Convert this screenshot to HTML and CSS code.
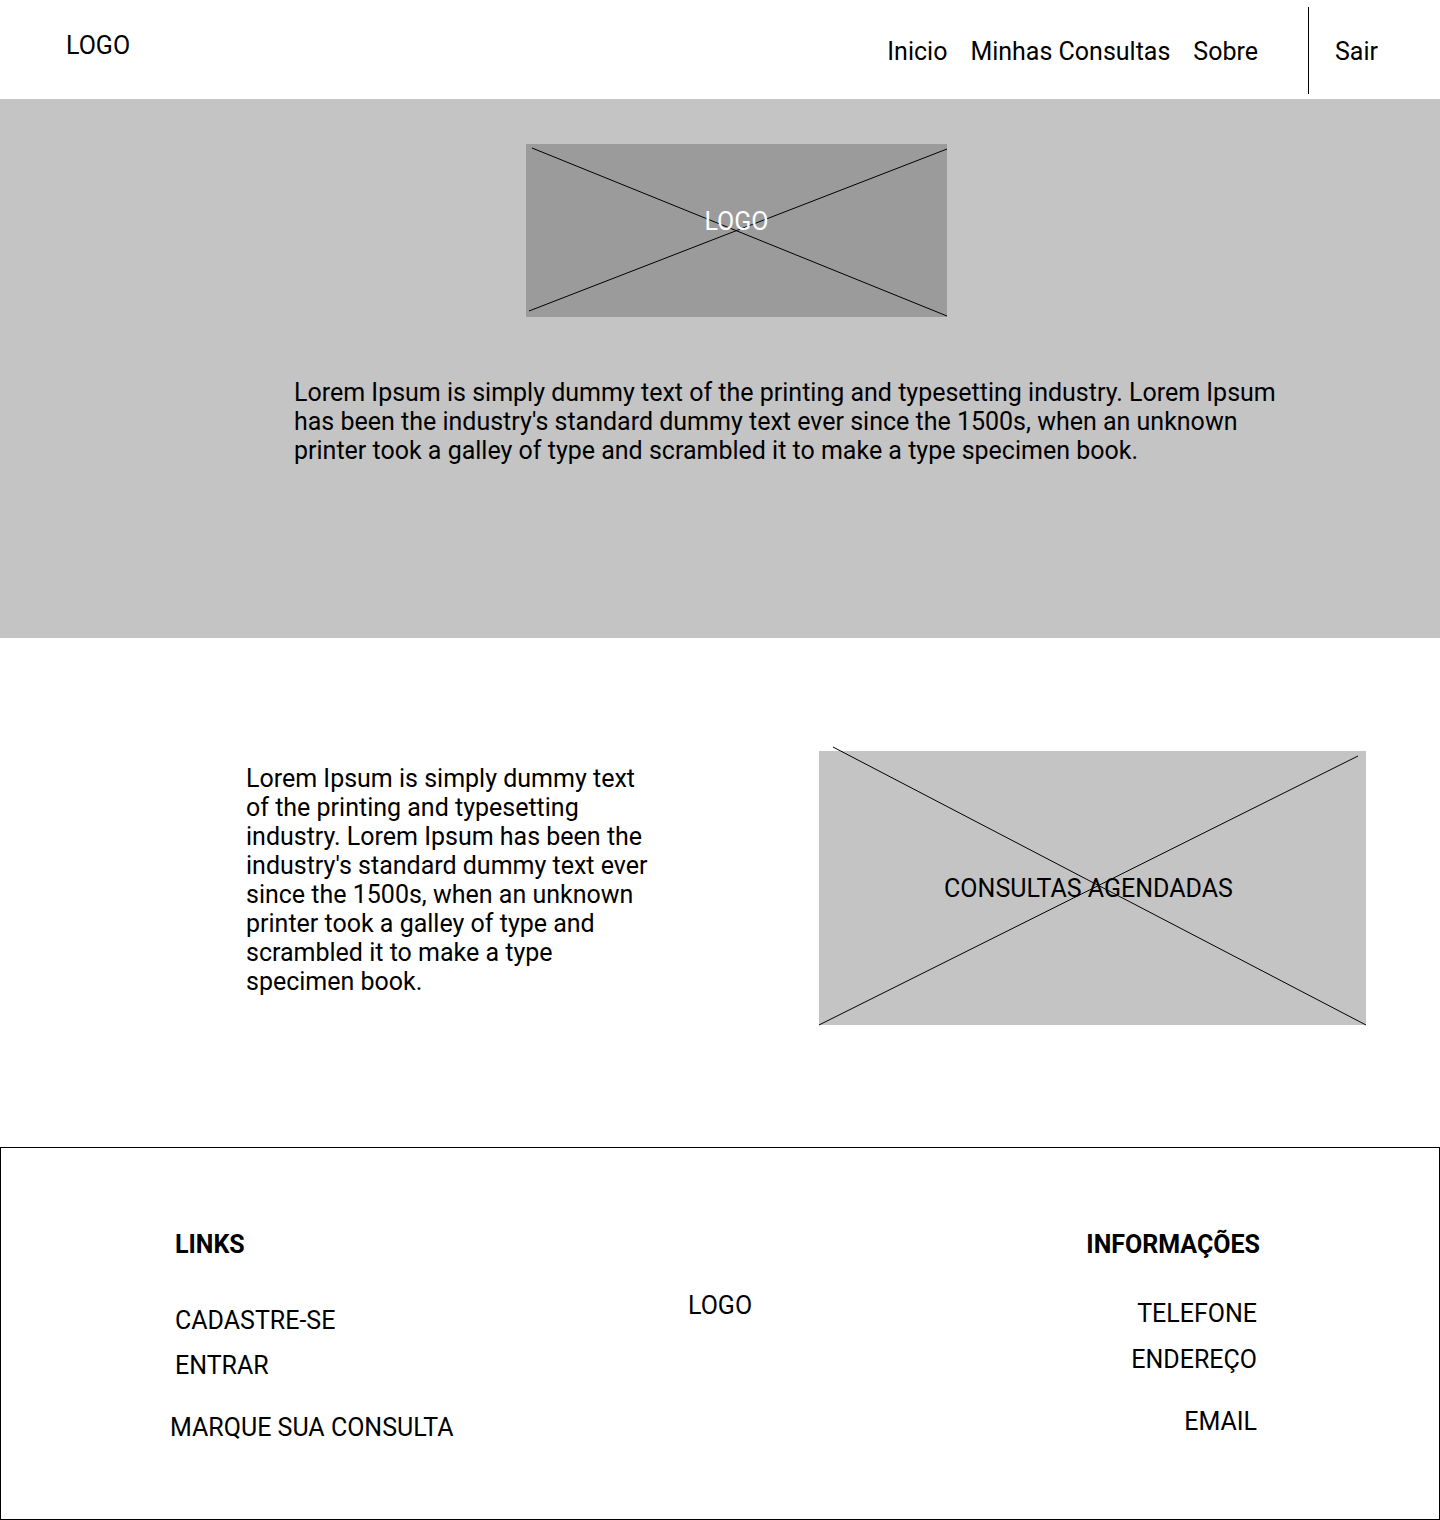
FILE: index.html
```html
<!DOCTYPE html>
<html lang="pt-BR">
<head>
<meta charset="utf-8">
<title>Consultas</title>
<link rel="stylesheet" href="styles.css">
</head>
<body>
<header class="topbar">
  <div class="brand">LOGO</div>
  <nav class="nav">
    <a class="nav-link" href="#">Inicio</a>
    <a class="nav-link" href="#">Minhas Consultas</a>
    <a class="nav-link" href="#">Sobre</a>
  </nav>
  <div class="nav-divider"></div>
  <a class="nav-link exit" href="#">Sair</a>
</header>

<section class="hero">
  <div class="hero-logo">
    <svg class="cross" viewBox="0 0 421 173" preserveAspectRatio="none">
      <line x1="6" y1="4" x2="421" y2="172" />
      <line x1="3" y1="167" x2="421" y2="5" />
    </svg>
    <span class="hero-logo-text">LOGO</span>
  </div>
  <p class="hero-text">Lorem Ipsum is simply dummy text of the printing and typesetting industry. Lorem Ipsum has been the industry's standard dummy text ever since the 1500s, when an unknown printer took a galley of type and scrambled it to make a type specimen book.</p>
</section>

<section class="info">
  <p class="info-text">Lorem Ipsum is simply dummy text of the printing and typesetting industry. Lorem Ipsum has been the industry's standard dummy text ever since the 1500s, when an unknown printer took a galley of type and scrambled it to make a type specimen book.</p>
  <div class="info-box">
    <svg class="cross" viewBox="0 0 547 274" preserveAspectRatio="none">
      <line x1="14" y1="-4" x2="547" y2="274" />
      <line x1="0" y1="274" x2="539" y2="5" />
    </svg>
    <span class="info-box-text">CONSULTAS AGENDADAS</span>
  </div>
</section>

<footer class="footer">
  <div class="col col-links">
    <h3 class="col-title">LINKS</h3>
    <a class="f-item f-cad" href="#">CADASTRE-SE</a>
    <a class="f-item f-entrar" href="#">ENTRAR</a>
    <a class="f-item f-marque" href="#">MARQUE SUA CONSULTA</a>
  </div>
  <div class="f-logo">LOGO</div>
  <div class="col col-info">
    <h3 class="col-title">INFORMAÇÕES</h3>
    <span class="f-item f-tel">TELEFONE</span>
    <span class="f-item f-end">ENDEREÇO</span>
    <span class="f-item f-email">EMAIL</span>
  </div>
</footer>
</body>
</html>
```

FILE: styles.css
```css
* { box-sizing: border-box; }

html, body {
  margin: 0;
  padding: 0;
}

body {
  font-family: Roboto, "Liberation Sans", Arial, sans-serif;
  font-size: 25px;
  line-height: 28px;
  color: #000;
  background: #fff;
}

a { color: inherit; text-decoration: none; }

/* Header */
.topbar {
  display: flex;
  align-items: flex-start;
  height: 99px;
  padding: 0 62px 0 66px;
}

.brand {
  margin-top: 32px;
}

.nav {
  margin-left: auto;
  margin-top: 38px;
  display: flex;
  gap: 23px;
}

.nav-divider {
  width: 1px;
  height: 87px;
  margin-top: 7px;
  margin-left: 50px;
  margin-right: 26px;
  background: #000;
}

.exit {
  margin-top: 38px;
}

/* Hero */
.hero {
  background: #c4c4c4;
  height: 539px;
  padding-top: 45px;
}

.hero-logo {
  position: relative;
  width: 421px;
  height: 173px;
  margin-left: 526px;
  background: #9b9b9b;
  display: flex;
  align-items: center;
  justify-content: center;
}

.cross {
  position: absolute;
  left: 0;
  top: 0;
  width: 100%;
  height: 100%;
  overflow: visible;
}

.cross line {
  stroke: #000;
  stroke-width: 1;
}

.hero-logo-text {
  position: relative;
  color: #fff;
  margin-top: -18px;
}

.hero-text {
  margin: 61px 0 0 294px;
  width: 1000px;
  line-height: 29px;
}

/* Info section */
.info {
  display: flex;
  align-items: flex-start;
  padding: 113px 0 122px 246px;
}

.info-text {
  width: 410px;
  margin: 13px 0 0 0;
  line-height: 29px;
}

.info-box {
  position: relative;
  width: 547px;
  height: 274px;
  margin-left: 163px;
  background: #c4c4c4;
  display: flex;
  align-items: center;
  justify-content: center;
}

.info-box-text {
  position: relative;
  margin-right: 8px;
  margin-top: 1px;
}

/* Footer */
.footer {
  border: 1px solid #000;
  height: 373px;
  display: flex;
  align-items: flex-start;
  padding: 83px 179px 0 174px;
}

.col {
  display: flex;
  flex-direction: column;
}

.col-links {
  width: 513px;
  align-items: flex-start;
}

.col-info {
  margin-left: auto;
  align-items: flex-end;
}

.col-title {
  margin: 0;
  font-size: 25px;
  line-height: 28px;
  font-weight: 700;
}

.f-item {
  display: block;
}

.f-cad { margin-top: 48px; }
.f-entrar { margin-top: 17px; }
.f-marque { margin-top: 34px; margin-left: -5px; }

.f-logo {
  margin-top: 61px;
}

.col-info .f-item { margin-right: 3px; }
.f-tel { margin-top: 41px; }
.f-end { margin-top: 18px; }
.f-email { margin-top: 34px; }
```
